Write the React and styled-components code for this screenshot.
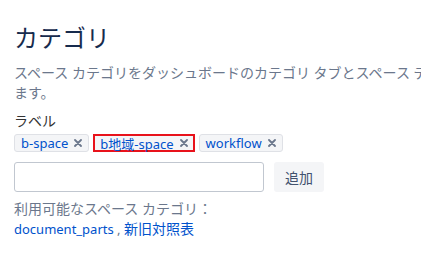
import React from 'react'
import styled, { createGlobalStyle } from 'styled-components'

const GlobalStyle = createGlobalStyle`
  html, body {
    margin: 0;
    padding: 0;
    background: #ffffff;
    overflow: hidden;
  }
  body {
    font-family: "Noto Sans", "Noto Sans CJK JP", sans-serif;
    color: #333333;
  }
`

const Page = styled.div`
  width: 560px;
  padding: 23px 0 0 14px;
  display: flex;
  flex-direction: column;
  align-items: flex-start;
`

const Title = styled.h1`
  margin: 0;
  font-size: 24px;
  line-height: 30px;
  font-weight: 400;
  color: #172b4d;
`

const Description = styled.p`
  margin: 10px 0 0;
  width: 552px;
  font-size: 14px;
  line-height: 20px;
  color: #6b778c;
`

const Label = styled.div`
  margin-top: 8px;
  font-size: 14px;
  line-height: 20px;
  color: #333333;
`

const TagList = styled.div`
  margin-top: 3px;
  display: flex;
  gap: 4px;
`

const Tag = styled.span`
  box-sizing: border-box;
  height: 18px;
  display: inline-flex;
  align-items: center;
  gap: 6px;
  padding: 0 ${p => (p.$selected ? 5 : 6)}px;
  border: ${p => (p.$selected ? '2px solid #e8121b' : '1px solid #dfe1e6')};
  border-radius: ${p => (p.$selected ? 0 : 3)}px;
  background: #f4f5f7;
  font-size: 13px;
  color: #0052cc;
  white-space: nowrap;
`

const Remove = styled.svg`
  width: 8px;
  height: 8px;
  flex: none;
`

const AddRow = styled.div`
  margin-top: 10px;
  display: flex;
  gap: 10px;
`

const Input = styled.input`
  box-sizing: border-box;
  width: 250px;
  height: 30px;
  border: 1px solid #c1c7d0;
  border-radius: 3px;
  padding: 0 6px;
  font: inherit;
  font-size: 14px;
`

const AddButton = styled.button`
  box-sizing: border-box;
  width: 50px;
  height: 30px;
  border: none;
  border-radius: 3px;
  background: #f4f5f7;
  color: #42526e;
  font-family: inherit;
  font-size: 14px;
  padding: 0;
`

const Hint = styled.div`
  margin-top: 7px;
  font-size: 14px;
  line-height: 20px;
  color: #6b778c;
`

const Links = styled.div`
  font-size: 13px;
  line-height: 20px;
  color: #6b778c;
  a {
    color: #0052cc;
    text-decoration: none;
  }
`

const CjkLink = styled.a`
  font-size: 14px;
`

const tags = ['b-space', 'b地域-space', 'workflow']

const RemoveIcon = () => (
  <Remove viewBox="0 0 8 8">
    <path d="M1 1L7 7M7 1L1 7" stroke="#6b778c" strokeWidth="1.8" strokeLinecap="round" />
  </Remove>
)

const App = () => {
  return (
    <>
      <GlobalStyle />
      <Page>
        <Title>カテゴリ</Title>
        <Description>
          スペース カテゴリをダッシュボードのカテゴリ タブとスペース ディレクトリに表示します。
        </Description>
        <Label>ラベル</Label>
        <TagList>
          {tags.map(t => (
            <Tag key={t} $selected={t === 'b地域-space'}>
              {t}
              <RemoveIcon />
            </Tag>
          ))}
        </TagList>
        <AddRow>
          <Input type="text" />
          <AddButton>追加</AddButton>
        </AddRow>
        <Hint>利用可能なスペース カテゴリ：</Hint>
        <Links>
          <a href="#">document_parts</a> , <CjkLink href="#">新旧対照表</CjkLink>
        </Links>
      </Page>
    </>
  )
}

export default App
